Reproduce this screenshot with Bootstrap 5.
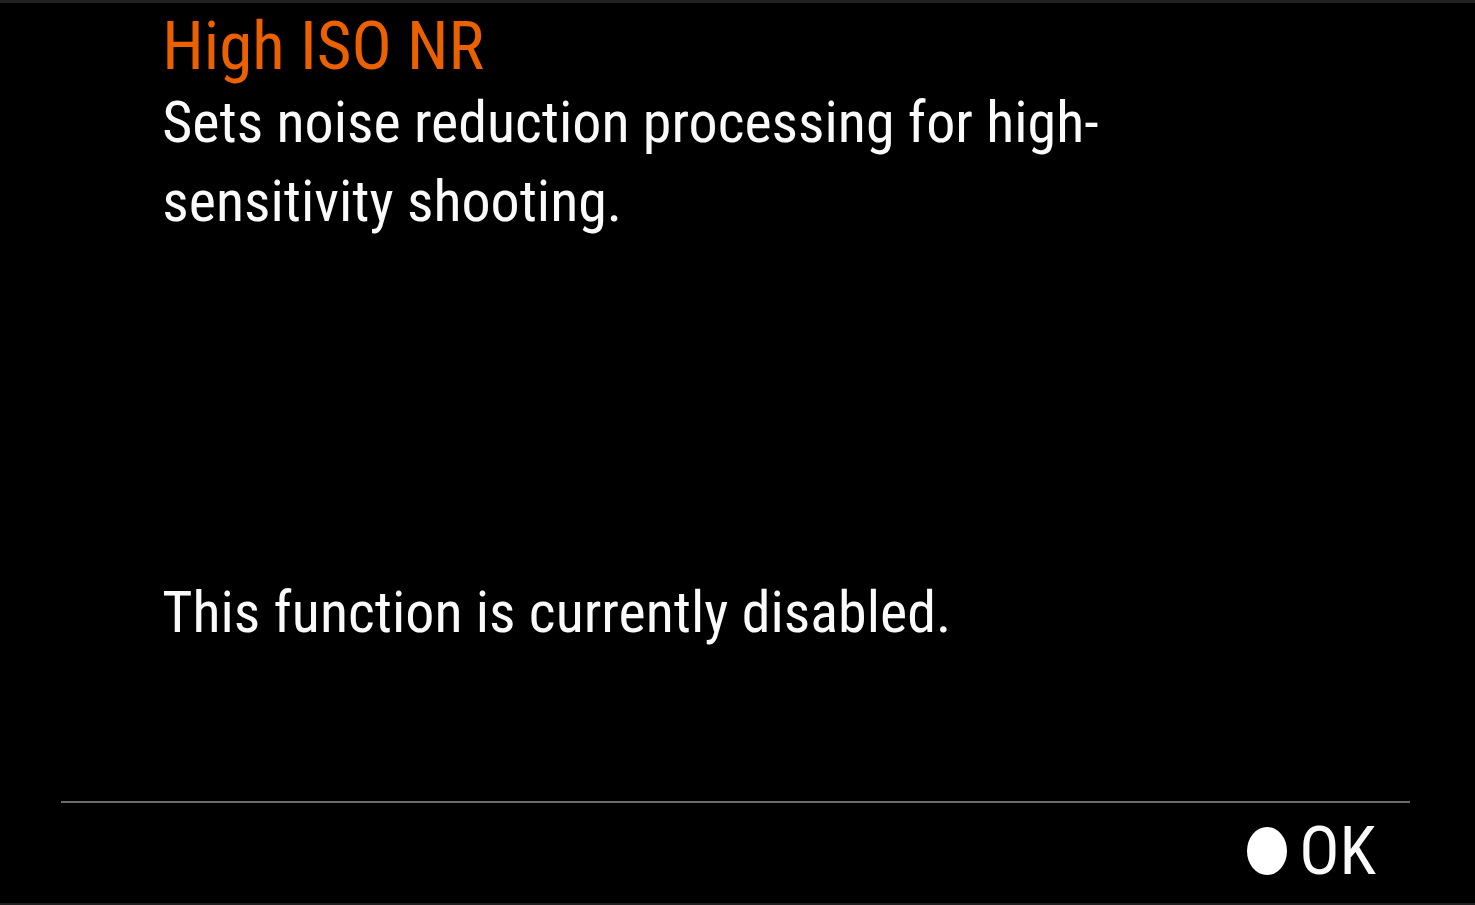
<!DOCTYPE html>
<html lang="en">
<head>
<meta charset="utf-8">
<meta name="viewport" content="width=device-width, initial-scale=1">
<title>High ISO NR</title>
<link href="https://cdn.jsdelivr.net/npm/bootstrap@5.3.0/dist/css/bootstrap.min.css" rel="stylesheet">
<style>
body { background: #000; color: #fafafa; font-family: "Roboto Condensed", Roboto, sans-serif; }
.help-screen { border-top: 3px solid #202020; border-bottom: 2px solid #202020; }
.help-copy { padding: 6px 11% 149px; font-size: 58px; line-height: 79px; }
.help-title { font-size: 67px; line-height: 74px; color: #eb6100; }
.help-footer { margin: 0 65px 0 61px; padding: 0 34px 4px 0; border-top: 2px solid #6b6b6b; }
.ok-button, .ok-button:hover { font-size: 67px; line-height: 96px; color: #fafafa; gap: 12px; }
.ok-dot { width: 40px; height: 48px; }
</style>
</head>
<body>
<main class="help-screen min-vh-100 d-flex flex-column">
  <section class="help-copy flex-grow-1 d-flex flex-column">
    <h1 class="help-title fw-normal mb-0">High ISO NR</h1>
    <p class="mb-0">Sets noise reduction processing for high-<br>sensitivity shooting.</p>
    <p class="mt-auto mb-0">This function is currently disabled.</p>
  </section>
  <footer class="help-footer d-flex justify-content-end">
    <button type="button" class="ok-button btn p-0 border-0 d-flex align-items-center">
      <svg class="ok-dot" viewBox="0 0 40 48" aria-hidden="true"><ellipse cx="20" cy="24" rx="20" ry="24" fill="#fff"/></svg>
      OK
    </button>
  </footer>
</main>
<script src="https://cdn.jsdelivr.net/npm/bootstrap@5.3.0/dist/js/bootstrap.bundle.min.js"></script>
</body>
</html>
